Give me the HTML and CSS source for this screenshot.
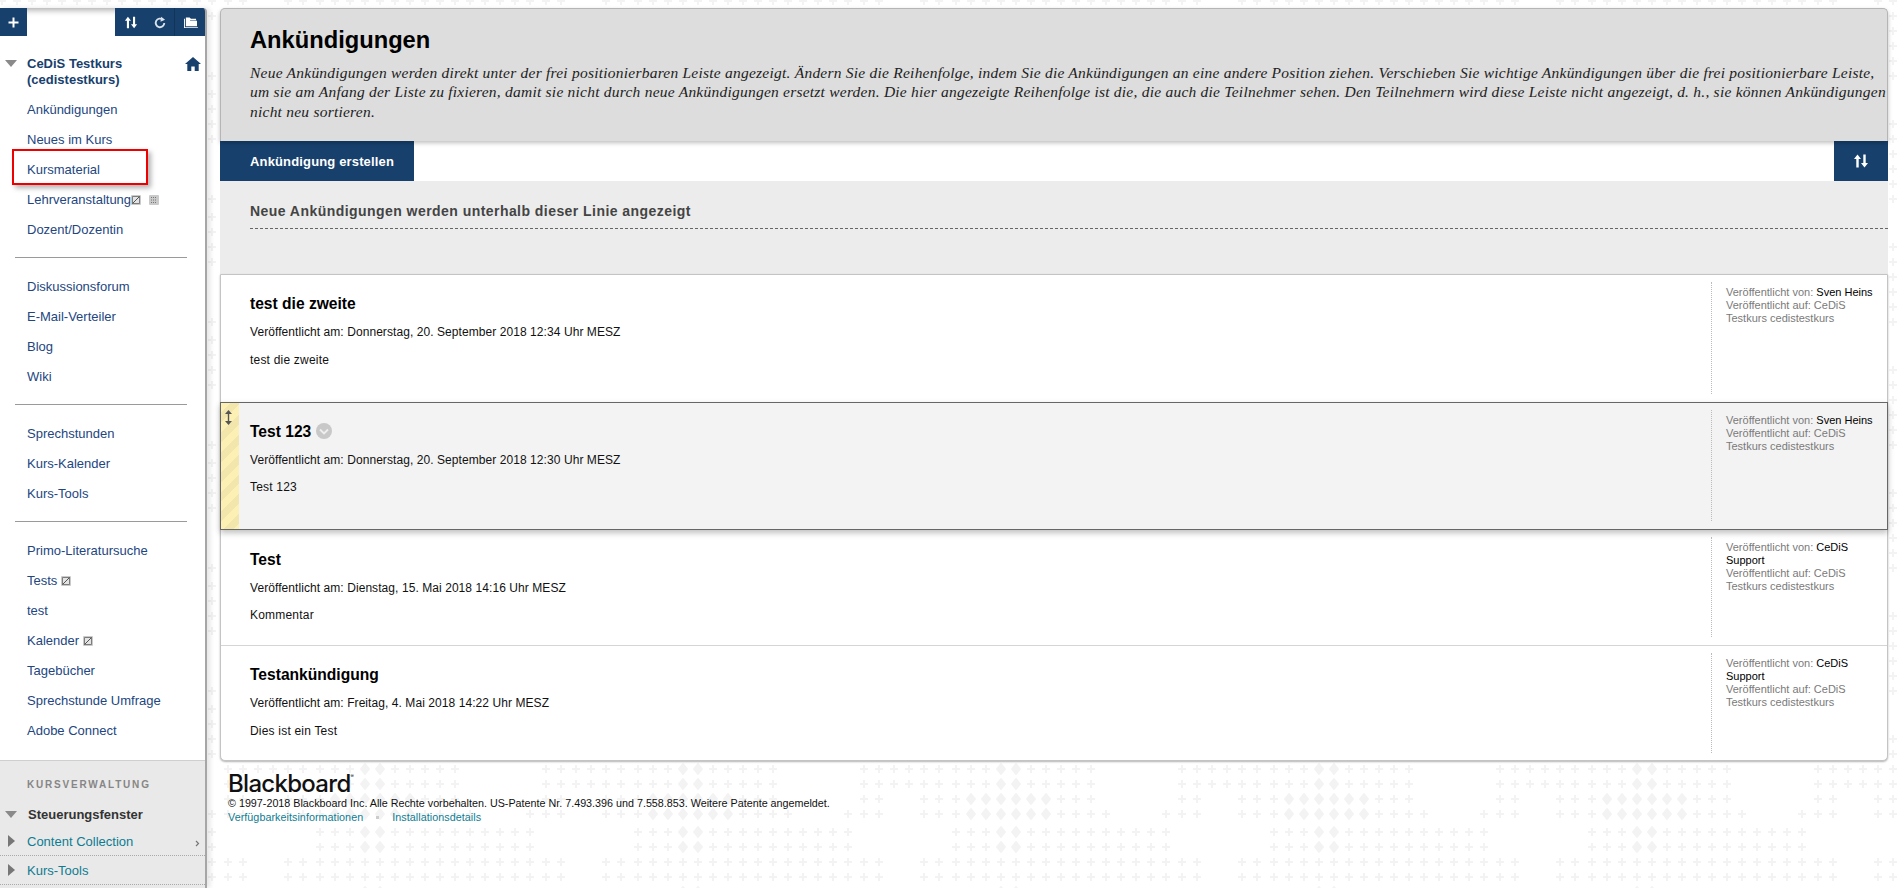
FILE: index.html
```html
<!DOCTYPE html>
<html lang="de">
<head>
<meta charset="utf-8">
<title>Ankündigungen</title>
<link rel="stylesheet" href="styles.css">
</head>
<body>
<div class="page">
  <aside class="sidebar">
    <div class="topbar">
      <button class="tb-btn tb-add"><svg width="11" height="11" viewBox="0 0 11 11"><path d="M4.500 0.500h2v4h4v2h-4v4h-2v-4h-4v-2h4z" fill="#fff"/></svg></button>
      <div class="tb-space"></div>
      <div class="tb-group">
        <button class="tb-btn tb-sort"><svg width="14" height="13" viewBox="0 0 16 14"><path d="M4.500 0.500L8 5H5.700v8.500H3.300V5H1zM10.300 0.500h2.400V9H15l-3.500 4.500L8 9h2.300z" fill="#fff"/></svg></button>
        <button class="tb-btn tb-refresh"><svg width="12" height="13" viewBox="0 0 14 14"><path d="M10.300 3.700A5 5 0 1 0 12 7.500" fill="none" stroke="#d9e1ea" stroke-width="2.200"/><path d="M8 0.500v6l5-3z" fill="#d9e1ea" transform="rotate(8 10 3)"/></svg></button>
        <button class="tb-btn tb-folder"><svg width="15" height="13" viewBox="0 0 16 14"><path d="M1 13V3h1v9h14v1zM3 11V1.500h4l1.500 1.500h5.500v1.500H7.500V5H15v6z" fill="#fff"/></svg></button>
      </div>
    </div>
    <nav class="nav">
      <div class="course">
        <svg class="tri-down" width="12" height="7" viewBox="0 0 12 7"><path d="M0 0h12L6 7z" fill="#8a8a8a"/></svg>
        <a class="course-name">CeDiS Testkurs (cedistestkurs)</a>
        <svg class="home" width="16" height="14" viewBox="0 0 16 14"><path d="M8 0L0 7h2.300v7h4v-4.500h3.400V14h4V7H16z" fill="#17406d"/></svg>
      </div>
      <ul class="menu">
        <li>Ankündigungen</li>
        <li>Neues im Kurs</li>
        <li class="marked">Kursmaterial<span class="redbox"></span></li>
        <li>Lehrveranstaltung <svg class="state state-1" width="10" height="10" viewBox="0 0 10 10"><rect width="10" height="10" rx="1" fill="#cacaca"/><path d="M1.500 1.500h7v7h-7z" fill="#e4e4e4" stroke="#666" stroke-width=".8"/><path d="M1.500 8.500l7-7" stroke="#444" stroke-width=".9"/></svg><svg class="state state-2" width="10" height="10" viewBox="0 0 10 10"><rect width="10" height="10" rx="1" fill="#cacaca"/><path d="M2 2.500h6M2 5h6M2 7.500h6" stroke="#777" stroke-dasharray="1 1"/></svg></li>
        <li>Dozent/Dozentin</li>
      </ul>
      <hr class="divider">
      <ul class="menu">
        <li>Diskussionsforum</li>
        <li>E-Mail-Verteiler</li>
        <li>Blog</li>
        <li>Wiki</li>
      </ul>
      <hr class="divider">
      <ul class="menu">
        <li>Sprechstunden</li>
        <li>Kurs-Kalender</li>
        <li>Kurs-Tools</li>
      </ul>
      <hr class="divider">
      <ul class="menu">
        <li>Primo-Literatursuche</li>
        <li>Tests <svg class="state" width="10" height="10" viewBox="0 0 10 10"><rect width="10" height="10" rx="1" fill="#cacaca"/><path d="M1.500 1.500h7v7h-7z" fill="#e4e4e4" stroke="#666" stroke-width=".8"/><path d="M1.500 8.500l7-7" stroke="#444" stroke-width=".9"/></svg></li>
        <li>test</li>
        <li>Kalender <svg class="state" width="10" height="10" viewBox="0 0 10 10"><rect width="10" height="10" rx="1" fill="#cacaca"/><path d="M1.500 1.500h7v7h-7z" fill="#e4e4e4" stroke="#666" stroke-width=".8"/><path d="M1.500 8.500l7-7" stroke="#444" stroke-width=".9"/></svg></li>
        <li>Tagebücher</li>
        <li>Sprechstunde Umfrage</li>
        <li>Adobe Connect</li>
      </ul>
    </nav>
    <section class="admin">
      <h3 class="admin-title">KURSVERWALTUNG</h3>
      <div class="panel-head">
        <svg class="tri-down" width="12" height="7" viewBox="0 0 12 7"><path d="M0 0h12L6 7z" fill="#8a8a8a"/></svg>
        <span>Steuerungsfenster</span>
      </div>
      <div class="tool-row">
        <svg class="tri-right" width="7" height="12" viewBox="0 0 7 12"><path d="M0 0l7 6-7 6z" fill="#777"/></svg>
        <a>Content Collection</a>
        <svg class="chev" width="5" height="7" viewBox="0 0 5 7"><path d="M1 1l2.500 2.500L1 6" fill="none" stroke="#777" stroke-width="1.200"/></svg>
      </div>
      <div class="tool-row">
        <svg class="tri-right" width="7" height="12" viewBox="0 0 7 12"><path d="M0 0l7 6-7 6z" fill="#777"/></svg>
        <a>Kurs-Tools</a>
      </div>
    </section>
  </aside>

  <main class="main">
    <div class="panel">
      <header class="head">
        <h1>Ankündigungen</h1>
        <p>Neue Ankündigungen werden direkt unter der frei positionierbaren Leiste angezeigt. Ändern Sie die Reihenfolge, indem Sie die Ankündigungen an eine andere Position ziehen. Verschieben Sie wichtige Ankündigungen über die frei positionierbare Leiste,<br>um sie am Anfang der Liste zu fixieren, damit sie nicht durch neue Ankündigungen ersetzt werden. Die hier angezeigte Reihenfolge ist die, die auch die Teilnehmer sehen. Den Teilnehmern wird diese Leiste nicht angezeigt, d. h., sie können Ankündigungen<br>nicht neu sortieren.</p>
      </header>
      <div class="actionbar">
        <button class="create">Ankündigung erstellen</button>
        <button class="sortbtn"><svg width="16" height="14" viewBox="0 0 16 14"><path d="M4.500 0.500L8 5H5.700v8.500H3.300V5H1zM10.300 0.500h2.400V9H15l-3.500 4.500L8 9h2.300z" fill="#fff"/></svg></button>
      </div>
      <div class="newline">
        <div class="newline-label">Neue Ankündigungen werden unterhalb dieser Linie angezeigt</div>
      </div>
      <div class="list">
        <article class="item item-1">
          <div class="item-body">
            <h2>test die zweite</h2>
            <div class="date">Veröffentlicht am: Donnerstag, 20. September 2018 12:34 Uhr MESZ</div>
            <div class="text">test die zweite</div>
          </div>
          <div class="item-meta">Veröffentlicht von: <b>Sven Heins</b><br>Veröffentlicht auf: CeDiS Testkurs cedistestkurs</div>
        </article>
        <article class="item item-2">
          <div class="handle"><svg width="7" height="15" viewBox="0 0 7 15"><path d="M3.500 0L7 4H4.200v7H7l-3.500 4L0 11h2.800V4H0z" fill="#555"/></svg></div>
          <div class="item-body">
            <h2>Test 123 <svg class="more" width="16" height="16" viewBox="0 0 16 16"><circle cx="8" cy="8" r="8" fill="#c8c8c8"/><path d="M4 6.500l4 4 4-4" fill="none" stroke="#eee" stroke-width="1.800"/></svg></h2>
            <div class="date">Veröffentlicht am: Donnerstag, 20. September 2018 12:30 Uhr MESZ</div>
            <div class="text">Test 123</div>
          </div>
          <div class="item-meta">Veröffentlicht von: <b>Sven Heins</b><br>Veröffentlicht auf: CeDiS Testkurs cedistestkurs</div>
        </article>
        <article class="item item-3">
          <div class="item-body">
            <h2>Test</h2>
            <div class="date">Veröffentlicht am: Dienstag, 15. Mai 2018 14:16 Uhr MESZ</div>
            <div class="text">Kommentar</div>
          </div>
          <div class="item-meta">Veröffentlicht von: <b>CeDiS</b> <b>Support</b><br>Veröffentlicht auf: CeDiS Testkurs cedistestkurs</div>
        </article>
        <article class="item item-4">
          <div class="item-body">
            <h2>Testankündigung</h2>
            <div class="date">Veröffentlicht am: Freitag, 4. Mai 2018 14:22 Uhr MESZ</div>
            <div class="text">Dies ist ein Test</div>
          </div>
          <div class="item-meta">Veröffentlicht von: <b>CeDiS</b> <b>Support</b><br>Veröffentlicht auf: CeDiS Testkurs cedistestkurs</div>
        </article>
      </div>
    </div>
    <footer class="foot">
      <div class="logo">Blackboard<sup>®</sup></div>
      <div class="copy">© 1997-2018 Blackboard Inc. Alle Rechte vorbehalten. US-Patente Nr. 7.493.396 und 7.558.853. Weitere Patente angemeldet.</div>
      <div class="links"><a>Verfügbarkeitsinformationen</a><span class="dot"></span><a>Installationsdetails</a></div>
    </footer>
  </main>
</div>
</body>
</html>
```
FILE: styles.css
```css
* { box-sizing: border-box; }
html, body { height: 100%; overflow: hidden; }
body {
  margin: 0;
  font-family: "Liberation Sans", Arial, sans-serif;
  color: #000;
  background-color: #fff;
  background-image: url("data:image/svg+xml,%3Csvg xmlns='http://www.w3.org/2000/svg' width='318' height='123'%3E%3Cdefs%3E%3Cpath id='a' d='M0 6H83M92 6H130M167 6H235M0 21H83M92 21H130M167 21H235M0 36H23M60 36H83M92 36H100M197 36H235M0 51H23M60 51H83M92 51H100M197 51H250M302 51H310M92 69H130M167 69H310M92 84H130M167 84H310M0 99H23M60 99H83M92 99H310M0 114H23M60 114H83M92 114H310'/%3E%3C/defs%3E%3Cg fill='none' stroke='%23f3f3f3'%3E%3Cuse href='%23a' stroke-width='2' stroke-dasharray='8 7'/%3E%3Cuse href='%23a' transform='translate(3)' stroke-width='8' stroke-dasharray='2 13'/%3E%3C/g%3E%3Cpath fill='%23f3f3f3' stroke='%23f3f3f3' stroke-width='2' stroke-linejoin='round' d='M141 1l4 5-4 5-4-5zM156 1l4 5-4 5-4-5zM141 16l4 5-4 5-4-5zM156 16l4 5-4 5-4-5zM111 31l4 5-4 5-4-5zM126 31l4 5-4 5-4-5zM141 31l4 5-4 5-4-5zM156 31l4 5-4 5-4-5zM171 31l4 5-4 5-4-5zM186 31l4 5-4 5-4-5zM111 46l4 5-4 5-4-5zM126 46l4 5-4 5-4-5zM141 46l4 5-4 5-4-5zM156 46l4 5-4 5-4-5zM171 46l4 5-4 5-4-5zM186 46l4 5-4 5-4-5zM141 64l4 5-4 5-4-5zM156 64l4 5-4 5-4-5zM141 79l4 5-4 5-4-5zM156 79l4 5-4 5-4-5z'/%3E%3C/svg%3E");
  background-position: 224px 25px;
}
button { border: 0; padding: 0; margin: 0; font: inherit; cursor: pointer; }
ul { list-style: none; margin: 0; padding: 0; }

.page { display: flex; padding-top: 8px; height: 100%; }

/* Sidebar */
.sidebar {
  width: 207px;
  flex: none;
  background: #fff;
  border-right: 2px solid #a6a6a6;
  box-shadow: 3px 0 5px rgba(0,0,0,.1);
  border-top-right-radius: 4px;
  display: flex;
  flex-direction: column;
  overflow: hidden;
}
.topbar { display: flex; height: 28px; flex: none; background: #fff; box-shadow: inset 0 6px 6px -4px rgba(0,0,0,.35); }
.tb-btn { display: flex; align-items: center; justify-content: center; background: #17406d; height: 28px; }
.tb-add { width: 27px; }
.tb-space { flex: 1; }
.tb-group { display: flex; }
.tb-sort { width: 31px; }
.tb-refresh { width: 28px; }
.tb-folder { width: 31px; border-left: 1px solid #123456; }

.nav { height: 724px; flex: none; padding-top: 20px; }
.course { position: relative; padding: 0 24px 0 27px; font-size: 13px; line-height: 16px; font-weight: 700; color: #17406d; margin-bottom: 7px; }
.course .tri-down { position: absolute; left: 5px; top: 4px; }
.course .home { position: absolute; right: 4px; top: 1px; }
.course-name { display: block; }
.menu li { position: relative; height: 30px; line-height: 30px; padding-left: 27px; font-size: 13px; color: #23467f; white-space: nowrap; }
.state { vertical-align: -1px; margin-left: 0; }
.state-1 { margin-left: -4px; }
.state-2 { margin-left: 8px; }
.redbox {
  position: absolute;
  left: 12px;
  top: -6px;
  width: 136px;
  height: 36px;
  border: 2.500px solid #ee0000;
  box-shadow: 3px 3px 5px rgba(0,0,0,.3);
}
.divider { border: 0; border-top: 1px solid #9a9a9a; margin: 12px 18px 14px 15px; height: 1px; }

.admin { flex: 1; background: #e9e9e9; border-top: 1px solid #cfcfcf; }
.admin-title { margin: 17px 0 0 27px; font-size: 10px; line-height: 13px; letter-spacing: 1.800px; color: #868686; font-weight: 700; }
.panel-head { position: relative; margin-top: 13px; padding-left: 28px; height: 23px; line-height: 21px; font-size: 13px; font-weight: 700; color: #333; }
.panel-head .tri-down { position: absolute; left: 5px; top: 7px; }
.tool-row { position: relative; height: 29px; line-height: 29px; padding-left: 27px; font-size: 13px; color: #0d7c92; border-bottom: 1px dotted #aaa; margin-top: 0; }
.tool-row .tri-right { position: absolute; left: 8px; top: 8px; }
.tool-row .chev { position: absolute; right: 5px; top: 13px; }

/* Main */
.main { width: 1668px; margin-left: 13px; flex: none; }
.head { height: 133px; background: #ddd; border: 1px solid #b5b5b5; border-bottom: 0; border-radius: 5px 5px 0 0; padding: 17px 0 0 29px; box-shadow: 0 2px 4px rgba(0,0,0,.25); position: relative; z-index: 1; }
.head h1 { margin: 0; font-size: 23.700px; line-height: 29px; font-weight: 700; }
.head p { margin: 8px 0 0; font-family: "Liberation Serif", "Times New Roman", serif; font-style: italic; font-size: 15.500px; line-height: 19.400px; color: #222; white-space: nowrap; letter-spacing: .23px; }
.actionbar { display: flex; justify-content: space-between; height: 40px; background: #fff; }
.create { width: 194px; height: 40px; background: #17406d; color: #fff; font-size: 13px; font-weight: 700; text-align: center; padding-left: 10px; letter-spacing: .15px; }
.sortbtn { width: 54px; height: 40px; background: #17406d; display: flex; align-items: center; justify-content: center; }
.newline { height: 93px; background: #ececec; padding: 22px 0 0 30px; }
.newline-label { font-size: 14px; line-height: 17px; font-weight: 700; color: #444; padding-bottom: 8px; border-bottom: 1px dashed #666; letter-spacing: .45px; }

.list { background: #fff; border: 1px solid #c4c4c4; border-radius: 0 0 5px 5px; box-shadow: 0 1px 2px rgba(0,0,0,.3); height: 487px; }
.item { position: relative; display: flex; border-bottom: 1px solid #d5d5d5; }
.item-1 { height: 128px; }
.item-2 { height: 128px; margin: -1px -1px 0 -1px; background: #f3f3f3; border: 1px solid #666; box-shadow: 0 3px 6px rgba(0,0,0,.25); z-index: 1; }
.item-3 { height: 116px; }
.item-4 { height: 115px; border-bottom: 0; }
.item-body { flex: 1; padding: 20px 0 0 29px; }
.item-2 .item-body { padding: 20px 0 0 29px; }
.item-3 .item-body { padding-top: 21px; }
.item-2 .text, .item-3 .text { margin-top: 12px; }
.item h2 { margin: 0; font-size: 15.600px; line-height: 18px; font-weight: 700; }
.more { vertical-align: -2px; }
.date { margin-top: 12px; font-size: 12px; line-height: 15px; color: #111; letter-spacing: .07px; }
.text { margin-top: 13px; font-size: 12px; line-height: 15px; color: #111; letter-spacing: .2px; }
.item-meta { width: 176px; margin: 7px 0 8px; padding: 4px 8px 0 14px; border-left: 1px dotted #bbb; font-size: 11px; line-height: 13px; color: #7a7a7a; flex: none; }
.item-meta b { font-weight: 400; color: #000; }
.handle { position: relative; width: 18px; flex: none; margin-right: -18px; padding: 7px 0 0 4px; background: repeating-linear-gradient(135deg, #fdf0b4 0 7px, #f3e6ac 7px 14px); }

.foot { padding: 10px 0 0 8px; }
.logo { font-family: Inter, "Liberation Sans", sans-serif; font-size: 24px; line-height: 26px; font-weight: 500; letter-spacing: -.7px; color: #111; }
.logo sup { font-size: 5px; vertical-align: 14px; line-height: 0; }
.copy { font-size: 10.750px; line-height: 14px; margin-top: -1px; color: #111; }
.links { font-size: 10.750px; line-height: 14px; color: #0d7c92; display: flex; align-items: center; letter-spacing: .05px; }
.dot { width: 3px; height: 3px; background: #ccc; margin: 0 13px; }
```
